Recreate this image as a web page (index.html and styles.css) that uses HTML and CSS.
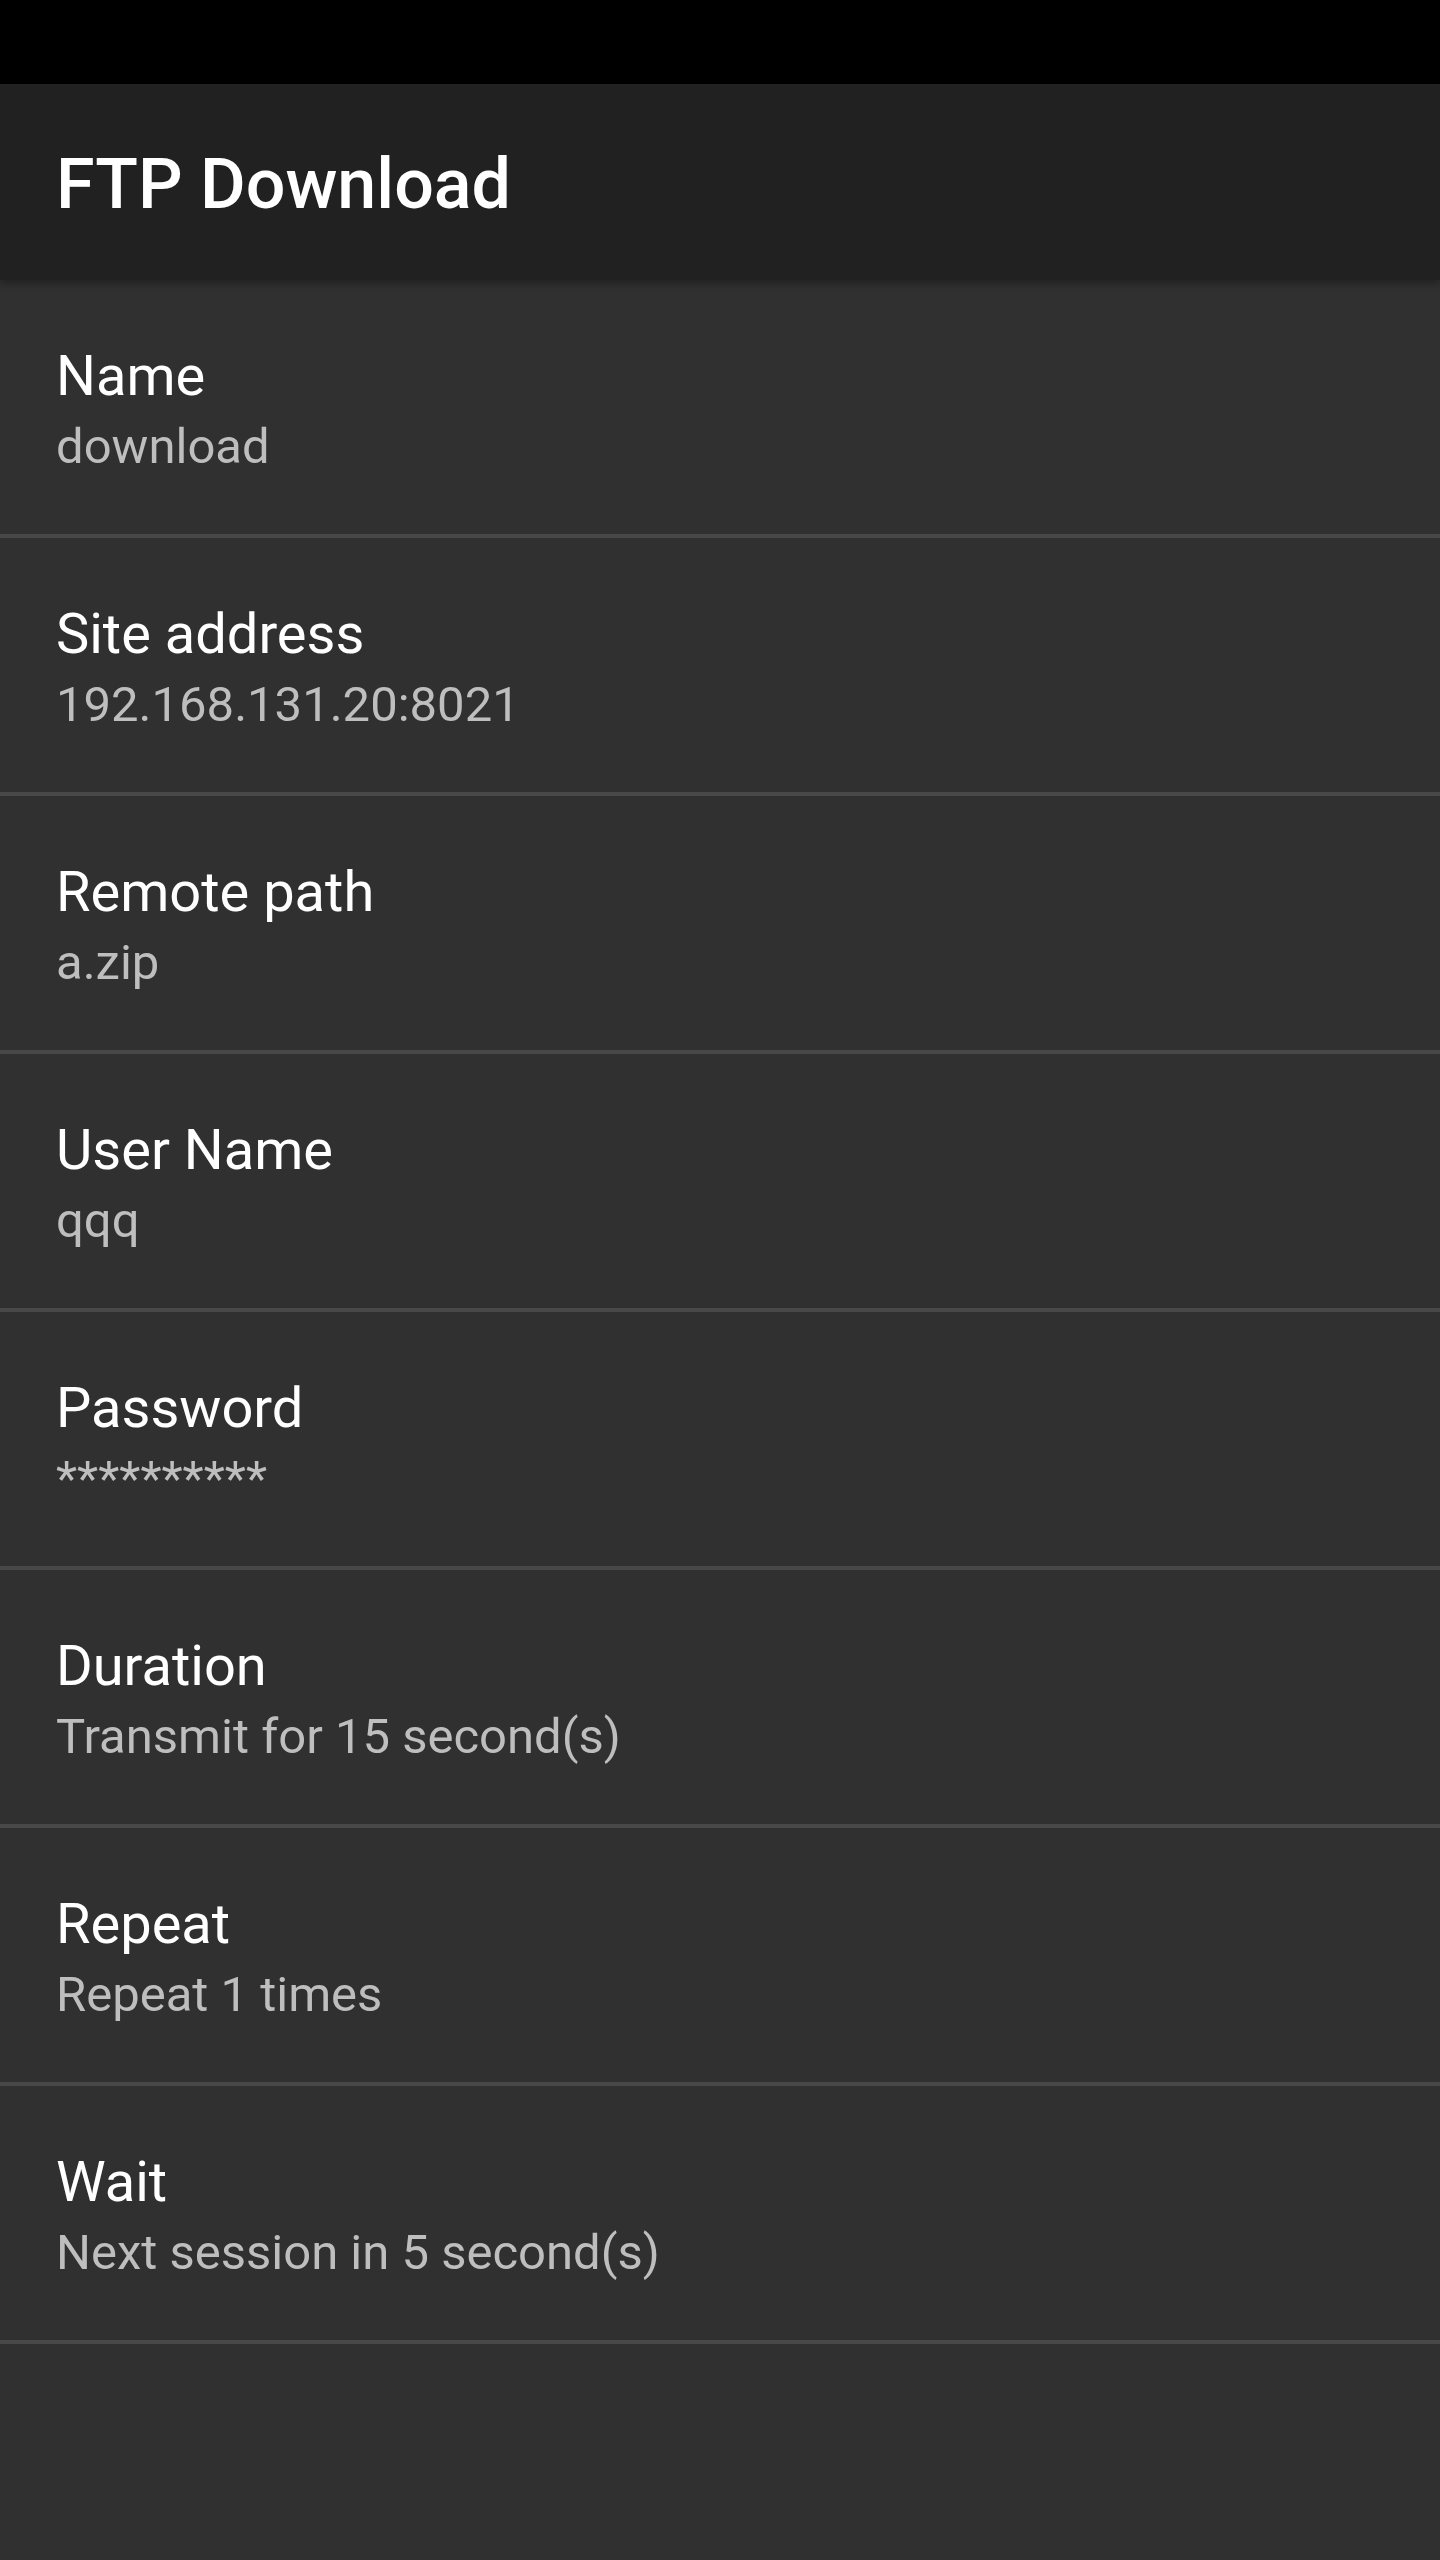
FILE: index.html
```html
<!DOCTYPE html>
<html lang="en">

<head>
  <meta charset="UTF-8">
  <meta name="viewport" content="width=device-width, initial-scale=1.0">
  <title>FTP Download</title>
  <link rel="stylesheet" href="styles.css">
</head>

<body>
  <!-- Status bar -->
  <div class="status-bar"></div>

  <!-- Toolbar -->
  <header class="app-bar">
    <h1>FTP Download</h1>
  </header>

  <!-- Settings list -->
  <ul class="prefs">
    <li class="pref">
      <div class="pref-title">Name</div>
      <div class="pref-summary">download</div>
    </li>
    <li class="pref">
      <div class="pref-title">Site address</div>
      <div class="pref-summary">192.168.131.20:8021</div>
    </li>
    <li class="pref">
      <div class="pref-title">Remote path</div>
      <div class="pref-summary">a.zip</div>
    </li>
    <li class="pref">
      <div class="pref-title">User Name</div>
      <div class="pref-summary">qqq</div>
    </li>
    <li class="pref">
      <div class="pref-title">Password</div>
      <div class="pref-summary">**********</div>
    </li>
    <li class="pref">
      <div class="pref-title">Duration</div>
      <div class="pref-summary">Transmit for 15 second(s)</div>
    </li>
    <li class="pref">
      <div class="pref-title">Repeat</div>
      <div class="pref-summary">Repeat 1 times</div>
    </li>
    <li class="pref">
      <div class="pref-title">Wait</div>
      <div class="pref-summary">Next session in 5 second(s)</div>
    </li>
  </ul>
</body>

</html>
```

FILE: styles.css
```css
* {
  margin: 0;
  padding: 0;
  box-sizing: border-box;
}

html, body {
  width: 100%;
  min-height: 100%;
}

body {
  background-color: #303030;
  font-family: "Roboto", "Noto Sans", sans-serif;
  color: #ffffff;
}

.status-bar {
  height: 84px;
  background-color: #000000;
}

/* Toolbar */
.app-bar {
  position: relative;
  z-index: 1;
  height: 196px;
  padding: 59px 56px 0;
  background-color: #212121;
  box-shadow: 0 3px 8px rgba(0, 0, 0, 0.35);
}

.app-bar h1 {
  font-size: 70px;
  font-weight: 500;
  line-height: 82px;
  color: #ffffff;
}

/* Lista de preferencias */
.prefs {
  list-style: none;
}

.pref {
  padding: 63px 56px 58px;
  border-bottom: 4px solid #484848;
}

.pref-title {
  font-size: 56px;
  line-height: 66px;
  color: #ffffff;
}

.pref-summary {
  margin-top: 9px;
  font-size: 49px;
  line-height: 58px;
  color: #bebebe;
}
```
